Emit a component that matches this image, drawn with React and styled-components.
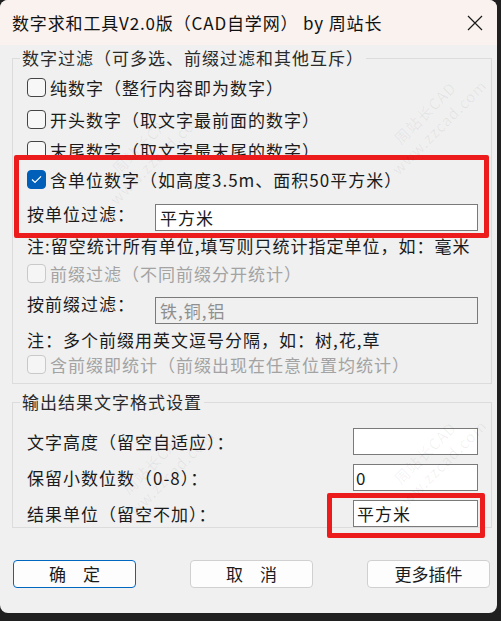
import React from "react";
import styled, { createGlobalStyle, css } from "styled-components";

const GlobalStyle = createGlobalStyle`
  html, body {
    margin: 0;
    padding: 0;
    background: #202020;
  }
  body {
    font-family: "Noto Sans CJK SC", "Noto Sans", sans-serif;
    color: #1b1b1b;
  }
`;

const Screen = styled.div`
  width: 501px;
  height: 621px;
  background: #202020;
  overflow: hidden;
`;

const Window = styled.div`
  position: relative;
  width: 497px;
  height: 613px;
  background: #f0f0f0;
  border-radius: 8px;
  overflow: hidden;
  display: flex;
  flex-direction: column;
`;

const TitleBar = styled.div`
  height: 45px;
  flex-shrink: 0;
  background: #f9f2ee;
  display: flex;
  align-items: center;
  justify-content: space-between;
  padding: 0 14px 0 12px;
  font-size: 17px;
  color: #111;
`;

const Title = styled.span`
  line-height: 20px;
  letter-spacing: 0.85px;
  white-space: nowrap;
`;

const Body = styled.div`
  padding: 0 5px 0 12px;
  display: flex;
  flex-direction: column;
  font-size: 17px;
  letter-spacing: 1px;
`;

const Group = styled.fieldset`
  margin: ${(p) => p.$mt}px 0 0 0;
  padding: ${(p) => p.$pt}px 13px ${(p) => p.$pb}px 14px;
  border: 1px solid #dcdcdc;
  min-width: 0;
  display: flex;
  flex-direction: column;
  gap: ${(p) => p.$gap || 0}px;
`;

const Legend = styled.legend`
  padding: 0 2px;
  margin-left: -7px;
  line-height: 20px;
  color: #2a2a2a;
`;

const Row = styled.div`
  display: flex;
  align-items: center;
  height: ${(p) => p.$h}px;
  flex-shrink: 0;
  color: ${(p) => (p.$disabled ? "#a3a3a3" : "#1b1b1b")};
  white-space: nowrap;
`;

const InputRow = styled.div`
  display: flex;
  align-items: flex-start;
  height: ${(p) => p.$h}px;
  padding-top: ${(p) => p.$pt}px;
  box-sizing: border-box;
  flex-shrink: 0;
  white-space: nowrap;
`;

const Label = styled.span`
  line-height: 20px;
  width: ${(p) => (p.$w ? `${p.$w}px` : "auto")};
  flex: ${(p) => (p.$grow ? 1 : "none")};
`;

const Box = styled.span`
  width: 19px;
  height: 19px;
  box-sizing: border-box;
  border-radius: 4px;
  margin-right: 4px;
  flex-shrink: 0;
  display: inline-flex;
  align-items: center;
  justify-content: center;
  border: 1px solid #444;
  background: #f7f7f7;
  ${(p) =>
    p.$checked &&
    css`
      border-color: #005fb8;
      background: #005fb8;
    `}
  ${(p) =>
    p.$disabled &&
    css`
      border-color: #c9c9c9;
      background: #f5f5f5;
    `}
`;

const Field = styled.input`
  height: 27px;
  box-sizing: border-box;
  margin: ${(p) => p.$mt || 0}px 0 0 0;
  border: 1px solid #7a7a7a;
  background: ${(p) => (p.disabled ? "#f0f0f0" : "#fff")};
  color: ${(p) => (p.disabled ? "#8f8f8f" : "#1b1b1b")};
  font: inherit;
  font-size: 17px;
  letter-spacing: 1px;
  padding: 0 0 0 ${(p) => p.$pl || 4}px;
  width: ${(p) => (p.$w ? `${p.$w}px` : "auto")};
  flex: ${(p) => (p.$w ? "none" : 1)};
  min-width: 0;
  outline: none;
`;

const Marked = styled.div`
  position: relative;
  display: flex;
  flex-direction: column;
  &::after {
    content: "";
    position: absolute;
    top: ${(p) => p.$t}px;
    right: ${(p) => p.$r}px;
    bottom: ${(p) => p.$b}px;
    left: ${(p) => p.$l}px;
    border: 5px solid #ec1c1c;
    border-radius: 2px;
    pointer-events: none;
    z-index: 2;
  }
`;

const Buttons = styled.div`
  margin-top: 32px;
  padding: 0 2px 0 1px;
  display: flex;
  justify-content: space-between;
`;

const Button = styled.button`
  width: 123px;
  height: 28px;
  box-sizing: border-box;
  background: #fdfdfd;
  border: 1px solid ${(p) => (p.$primary ? "#0067c0" : "#d0d0d0")};
  border-radius: 4px;
  font-family: inherit;
  font-size: 17px;
  color: #1b1b1b;
  padding: 0;
  line-height: 20px;
`;

/* faint diagonal watermark stamped over the screenshot */
const Stamp = styled.div`
  position: absolute;
  left: ${(p) => p.$x}px;
  top: ${(p) => p.$y}px;
  transform: translate(-50%, -50%) rotate(-45deg);
  display: flex;
  flex-direction: column;
  align-items: center;
  font-size: 15px;
  line-height: 20px;
  letter-spacing: 1px;
  color: rgba(0, 0, 0, 0.06);
  white-space: nowrap;
  pointer-events: none;
  z-index: 3;
`;

const stamps = [
  { x: 150, y: 150 },
  { x: 432, y: 120 },
  { x: 160, y: 470 },
  { x: 432, y: 460 },
];

function Check({ checked, disabled, children, h }) {
  return (
    <Row $h={h} $disabled={disabled}>
      <Box $checked={checked} $disabled={disabled}>
        {checked && (
          <svg width="11" height="9" viewBox="0 0 11 9">
            <path d="M1 4.6 L4 7.4 L10 1.4" fill="none" stroke="#fff" strokeWidth="1.3" />
          </svg>
        )}
      </Box>
      <span>{children}</span>
    </Row>
  );
}

export default function App() {
  return (
    <Screen>
      <GlobalStyle />
      <Window>
        <TitleBar>
          <Title>数字求和工具V2.0版（CAD自学网） by 周站长</Title>
          <svg width="16" height="16" viewBox="0 0 16 16">
            <path d="M1 1 L15 15 M15 1 L1 15" stroke="#1a1a1a" strokeWidth="1.2" />
          </svg>
        </TitleBar>
        <Body>
          <Group $mt={3} $pt={4} $pb={7}>
            <Legend>数字过滤（可多选、前缀过滤和其他互斥）</Legend>
            <Check h={31}>纯数字（整行内容即为数字）</Check>
            <Check h={33}>开头数字（取文字最前面的数字）</Check>
            <Check h={28}>末尾数字（取文字最末尾的数字）</Check>
            <Marked $t={-9} $r={-11} $b={-4} $l={-13}>
              <Check h={30} checked>
                含单位数字（如高度3.5m、面积50平方米）
              </Check>
              <InputRow $h={40} $pt={10}>
                <Label $w={128}>按单位过滤：</Label>
                <Field readOnly value="平方米" />
              </InputRow>
            </Marked>
            <Row $h={22}>注:留空统计所有单位,填写则只统计指定单位，如：毫米</Row>
            <Check h={34} disabled>
              前缀过滤（不同前缀分开统计）
            </Check>
            <InputRow $h={37} $pt={4}>
              <Label $w={128}>按前缀过滤：</Label>
              <Field disabled value="铁,铜,铝" $mt={3} />
            </InputRow>
            <Row $h={25}>注：多个前缀用英文逗号分隔，如：树,花,草</Row>
            <Check h={24} disabled>
              含前缀即统计（前缀出现在任意位置均统计）
            </Check>
          </Group>

          <Group $mt={8} $pt={16} $pb={0} $gap={9}>
            <Legend>输出结果文字格式设置</Legend>
            <Row $h={27}>
              <Label $grow>文字高度（留空自适应）：</Label>
              <Field readOnly value="" $w={125} $pl={3} />
            </Row>
            <Row $h={27}>
              <Label $grow>保留小数位数（0-8）：</Label>
              <Field readOnly value="0" $w={125} $pl={2} />
            </Row>
            <Row $h={27}>
              <Label $grow>结果单位（留空不加）：</Label>
              <Marked $t={-7} $r={-7} $b={-11} $l={-26}>
                <Field readOnly value="平方米" $w={125} $pl={3} />
              </Marked>
            </Row>
          </Group>

          <Buttons>
            <Button $primary>确　定</Button>
            <Button>取　消</Button>
            <Button>更多插件</Button>
          </Buttons>
        </Body>
        {stamps.map((s, i) => (
          <Stamp key={i} $x={s.x} $y={s.y}>
            <span>周站长CAD</span>
            <span>www.zzcad.com</span>
          </Stamp>
        ))}
      </Window>
    </Screen>
  );
}
